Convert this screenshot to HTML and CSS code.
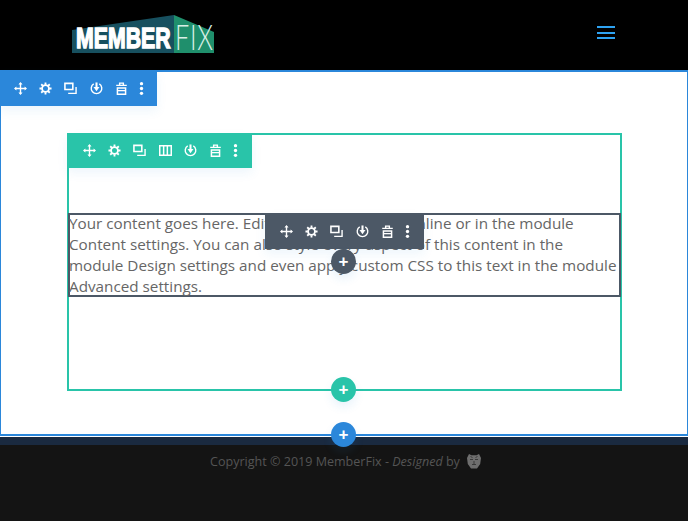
FILE: index.html
```html
<!DOCTYPE html>
<html>

<head>
  <title>MemberFix</title>
  <link rel="stylesheet" href="styles.css">
</head>

<body>
  <!-- icons used by the builder toolbars -->
  <svg class="icon-defs" width="0" height="0">
    <symbol id="i-move" viewBox="0 0 14 14">
      <path d="M7 1v12M1 7h12" fill="none" stroke="currentColor" stroke-width="1.5" />
      <path d="M7 0l2.200 2.600H4.800zM7 14l2.200-2.600H4.800zM0 7l2.600-2.200v4.400zM14 7l-2.600-2.200v4.400z" fill="currentColor" />
    </symbol>
    <symbol id="i-gear" viewBox="0 0 14 14">
      <circle cx="7" cy="7" r="3.700" fill="none" stroke="currentColor" stroke-width="2" />
      <path d="M7 .5v2.500M7 11v2.500M.5 7H3M11 7h2.500M2.400 2.400l1.800 1.800M9.800 9.800l1.800 1.800M11.600 2.400L9.800 4.200M4.200 9.800l-1.800 1.800" stroke="currentColor" stroke-width="2" />
    </symbol>
    <symbol id="i-clone" viewBox="0 0 14 14">
      <path d="M1 1.500h8.500V8H1z" fill="none" stroke="currentColor" stroke-width="1.700" />
      <path d="M13 5.500v6.700H4.500" fill="none" stroke="currentColor" stroke-width="1.500" />
    </symbol>
    <symbol id="i-cols" viewBox="0 0 14 14">
      <path d="M.8 2h12.400v10H.8zM5 2v10M9 2v10" fill="none" stroke="currentColor" stroke-width="1.600" />
    </symbol>
    <symbol id="i-save" viewBox="0 0 14 14">
      <path d="M4 2a5.700 5.700 0 1 0 6 0" fill="none" stroke="currentColor" stroke-width="1.500" />
      <path d="M7 .5v6" stroke="currentColor" stroke-width="2.200" />
      <path d="M3.800 5.500h6.400L7 10z" fill="currentColor" />
    </symbol>
    <symbol id="i-trash" viewBox="0 0 14 14">
      <path d="M1.300 3.600h11.400M5 3V1.200h4V3" fill="none" stroke="currentColor" stroke-width="1.500" />
      <path d="M2.600 6.400h8.800v6.800H2.600z" fill="none" stroke="currentColor" stroke-width="1.600" />
      <path d="M2.600 9.300h8.800" stroke="currentColor" stroke-width="1.400" />
    </symbol>
    <symbol id="i-dots" viewBox="0 0 14 14">
      <circle cx="7" cy="1.800" r="1.800" fill="currentColor" />
      <circle cx="7" cy="7" r="1.800" fill="currentColor" />
      <circle cx="7" cy="12.200" r="1.800" fill="currentColor" />
    </symbol>
  </svg>

  <header class="site-header">
    <svg class="logo" width="143" height="39" viewBox="0 0 143 39">
      <polygon points="0,16 102,1 102,39 0,39" fill="#17505f" />
      <polygon points="102,1 142,18 142,39 102,39" fill="#1f8f6c" />
      <text class="logo-member" transform="translate(4 34) scale(.71 1)">MEMBER</text>
      <text class="logo-fix" transform="translate(103 36) scale(.7 1)">FIX</text>
    </svg>
    <div class="menu-btn">
      <span></span>
      <span></span>
      <span></span>
    </div>
  </header>

  <section class="section">
    <div class="toolbar toolbar-section">
      <span class="tool"><svg><use href="#i-move" /></svg></span>
      <span class="tool"><svg><use href="#i-gear" /></svg></span>
      <span class="tool"><svg><use href="#i-clone" /></svg></span>
      <span class="tool"><svg><use href="#i-save" /></svg></span>
      <span class="tool"><svg><use href="#i-trash" /></svg></span>
      <span class="tool tool-dots"><svg><use href="#i-dots" /></svg></span>
    </div>

    <div class="row">
      <div class="toolbar toolbar-row">
        <span class="tool"><svg><use href="#i-move" /></svg></span>
        <span class="tool"><svg><use href="#i-gear" /></svg></span>
        <span class="tool"><svg><use href="#i-clone" /></svg></span>
        <span class="tool"><svg><use href="#i-cols" /></svg></span>
        <span class="tool"><svg><use href="#i-save" /></svg></span>
        <span class="tool"><svg><use href="#i-trash" /></svg></span>
        <span class="tool tool-dots"><svg><use href="#i-dots" /></svg></span>
      </div>

      <div class="module">
        <p>Your content goes here. Edit or remove this text inline or in the module Content settings. You can also style every aspect of this content in the module Design settings and even apply custom CSS to this text in the module Advanced settings.</p>
        <div class="toolbar toolbar-module">
          <span class="tool"><svg><use href="#i-move" /></svg></span>
          <span class="tool"><svg><use href="#i-gear" /></svg></span>
          <span class="tool"><svg><use href="#i-clone" /></svg></span>
          <span class="tool"><svg><use href="#i-save" /></svg></span>
          <span class="tool"><svg><use href="#i-trash" /></svg></span>
          <span class="tool tool-dots"><svg><use href="#i-dots" /></svg></span>
        </div>
        <span class="add add-module">+</span>
      </div>

      <span class="add add-row">+</span>
    </div>

    <span class="add add-section">+</span>
  </section>

  <div class="footer-band"></div>
  <footer class="site-footer">
    <span>Copyright © 2019 MemberFix - <em>Designed</em> by</span>
    <svg class="lion" width="14" height="16" viewBox="0 0 14 16">
      <path d="M2 1l2.500 1.200h5L12 1l2 4-.8 6-3.200 4.500H4L.8 11 0 5z" fill="#6e6e6e" />
      <path d="M3 6.500h3M8 6.500h3M5 11.500h4M7 8v3.500M3.500 3.500l2 1M10.500 3.500l-2 1" stroke="#3a3a3a" stroke-width="1" />
    </svg>
  </footer>
</body>

</html>
```

FILE: styles.css
```css
* {
  box-sizing: border-box;
}

body {
  font-family: "Open Sans", sans-serif;
  margin: 0;
  background-color: #141414;
  color: #666;
}

.icon-defs {
  display: block;
  height: 0;
}

/* Header */
.site-header {
  display: flex;
  justify-content: space-between;
  align-items: flex-start;
  height: 70px;
  padding: 14px 73px 0 72px;
  background-color: #000;
}

.logo {
  display: block;
  overflow: visible;
}

.logo-member {
  font-family: "Liberation Sans", sans-serif;
  font-size: 30px;
  font-weight: 700;
  fill: #fff;
  stroke: #fff;
  stroke-width: 1.500;
}

.logo-fix {
  font-family: Lato, sans-serif;
  font-size: 36px;
  font-weight: 300;
  letter-spacing: 1px;
  fill: #d8efe6;
}

.menu-btn {
  display: flex;
  flex-direction: column;
  gap: 3.500px;
  width: 18px;
  margin-top: 12px;
}

.menu-btn span {
  height: 2px;
  background-color: #2ea3f2;
}

/* Section */
.section {
  position: relative;
  height: 366px;
  padding: 61px 65px 0 66px;
  background-color: #fff;
  border: solid #2b87da;
  border-width: 2px 1px 2px 1px;
}

.row {
  position: relative;
  height: 258px;
  padding-top: 78px;
  border: 2px solid #29c4a9;
}

.module {
  position: relative;
  height: 84px;
  margin: 0 -1px;
  border: 2px solid #4c5866;
}

.module p {
  margin: -2px 0 0 -1px;
  font-size: 15.250px;
  line-height: 21px;
}

/* Builder toolbars */
.toolbar {
  position: absolute;
  display: flex;
  align-items: center;
  height: 36px;
  padding-left: 8px;
  color: #fff;
  box-shadow: 0 5px 10px rgba(43, 135, 218, 0.08);
}

.toolbar-section {
  top: -2px;
  left: -1px;
  width: 157px;
  background-color: #2b87da;
}

.toolbar-row {
  top: -2px;
  left: -2px;
  width: 185px;
  height: 35px;
  padding-left: 10px;
  background-color: #29c4a9;
}

.toolbar-module {
  top: -2px;
  left: 195px;
  width: 159px;
  padding-left: 9px;
  background-color: #4c5866;
}

.tool {
  display: flex;
  justify-content: center;
  align-items: center;
  width: 25.200px;
  height: 100%;
}

.tool svg {
  display: block;
  width: 13px;
  height: 13px;
}

.tool-dots {
  width: 15px;
}

/* Round add buttons */
.add {
  position: absolute;
  display: flex;
  justify-content: center;
  align-items: center;
  width: 25px;
  height: 25px;
  border-radius: 50%;
  color: #fff;
  font-family: "Liberation Sans", sans-serif;
  font-size: 17px;
  font-weight: 700;
  line-height: 1;
  box-shadow: 0 5px 10px rgba(43, 135, 218, 0.1);
}

.add-module {
  top: 34px;
  left: 261px;
  background-color: #4c5866;
}

.add-row {
  left: 262px;
  bottom: -13px;
  background-color: #29c4a9;
}

.add-section {
  left: 330px;
  bottom: -13px;
  background-color: #2b87da;
}

/* Footer */
.footer-band {
  height: 9px;
  border-top: 1px solid #fff;
  background-color: #1a2a40;
}

.site-footer {
  display: flex;
  justify-content: center;
  align-items: center;
  gap: 7px;
  height: 76px;
  padding-bottom: 44px;
  padding-left: 3px;
  font-size: 12.550px;
  color: #555;
}

.lion {
  display: block;
}
```
